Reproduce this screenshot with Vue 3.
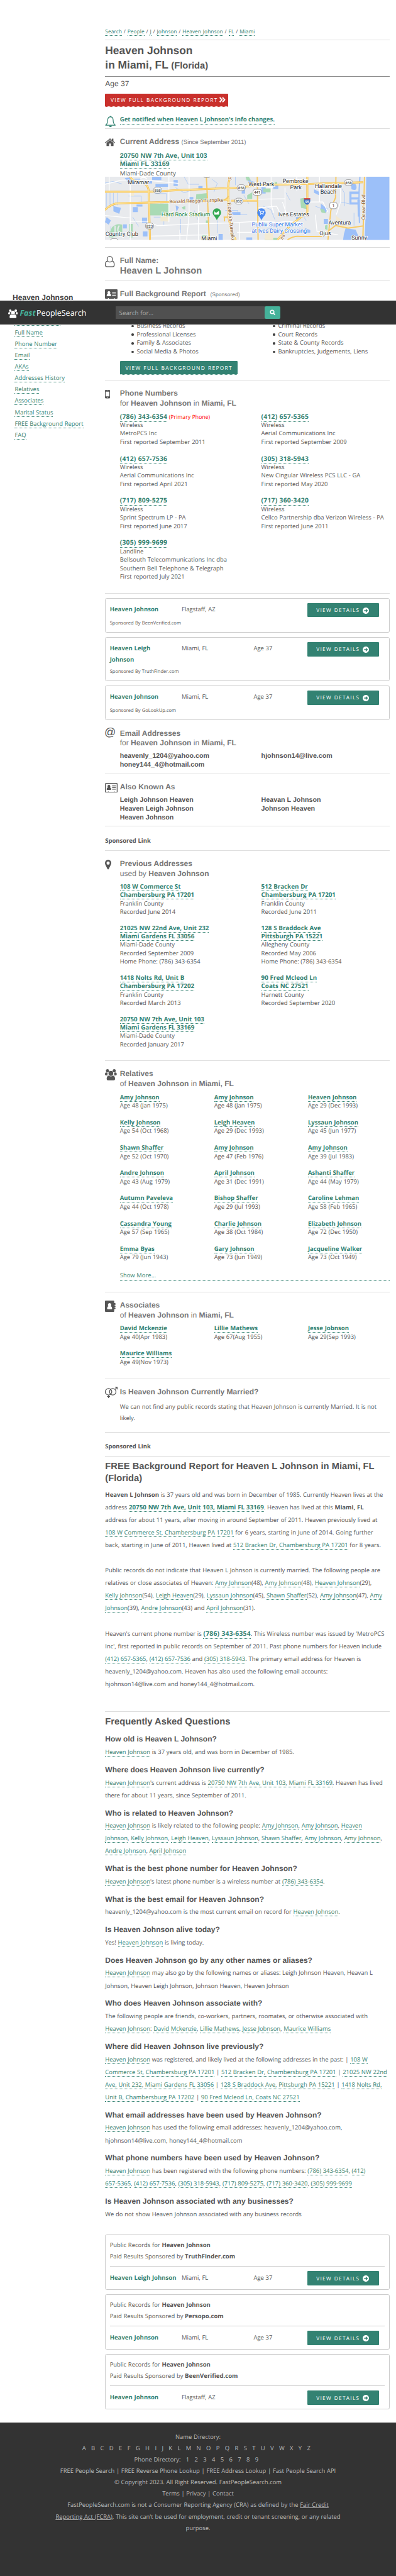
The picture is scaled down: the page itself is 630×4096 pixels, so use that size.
<script setup>
// [text] is a link, *text* is bold, {text} is a bold link
const parse = (line) =>
  line.split(/(\[[^\]]*\]|\*[^*]*\*|\{[^}]*\})/).filter(Boolean).map((t) => {
    if (t[0] === '[') return { kind: 'lk', text: t.slice(1, -1) }
    if (t[0] === '{') return { kind: t[1] === '(' ? 'lk b num' : 'lk b ad-link', text: t.slice(1, -1) }
    if (t[0] === '*') return { kind: 'b', text: t.slice(1, -1) }
    return { kind: '', text: t }
  })

const crumbs = ['Search', 'People', 'J', 'Johnson', 'Heaven Johnson', 'FL', 'Miami']
const nav = ['Current Address', 'Full Name', 'Phone Number', 'Email', 'AKAs', 'Addresses History', 'Relatives', 'Associates', 'Marital Status', 'FREE Background Report', 'FAQ']
const reportA = ['Business Records', 'Professional Licenses', 'Family & Associates', 'Social Media & Photos']
const reportB = ['Criminal Records', 'Court Records', 'State & County Records', 'Bankruptcies, Judgements, Liens']
const phones = [
  { n: '(786) 343-6354', primary: true, l: ['Wireless', 'MetroPCS Inc', 'First reported September 2011'] },
  { n: '(412) 657-5365', l: ['Wireless', 'Aerial Communications Inc', 'First reported September 2009'] },
  { n: '(412) 657-7536', l: ['Wireless', 'Aerial Communications Inc', 'First reported April 2021'] },
  { n: '(305) 318-5943', l: ['Wireless', 'New Cingular Wireless PCS LLC - GA', 'First reported May 2020'] },
  { n: '(717) 809-5275', l: ['Wireless', 'Sprint Spectrum LP - PA', 'First reported June 2017'] },
  { n: '(717) 360-3420', l: ['Wireless', 'Cellco Partnership dba Verizon Wireless - PA', 'First reported June 2011'] },
  { n: '(305) 999-9699', l: ['Landline', 'Bellsouth Telecommunications Inc dba', 'Southern Bell Telephone & Telegraph', 'First reported July 2021'] }
]
const ads = [
  { name: 'Heaven Johnson', loc: 'Flagstaff, AZ', age: '', by: 'BeenVerified.com' },
  { name: 'Heaven Leigh Johnson', loc: 'Miami, FL', age: 'Age 37', by: 'TruthFinder.com', tall: true },
  { name: 'Heaven Johnson', loc: 'Miami, FL', age: 'Age 37', by: 'GoLookUp.com' }
]
const paid = [
  { name: 'Heaven Leigh Johnson', loc: 'Miami, FL', age: 'Age 37', by: 'TruthFinder.com' },
  { name: 'Heaven Johnson', loc: 'Miami, FL', age: 'Age 37', by: 'Persopo.com' },
  { name: 'Heaven Johnson', loc: 'Flagstaff, AZ', age: '', by: 'BeenVerified.com' }
]
const emails = ['heavenly_1204@yahoo.com', 'hjohnson14@live.com', 'honey144_4@hotmail.com']
const akas = ['Leigh Johnson Heaven', 'Heavan L Johnson', 'Heaven Leigh Johnson', 'Johnson Heaven', 'Heaven Johnson']
const places = [
  ['108 W Commerce St', 'Chambersburg PA 17201', 'Franklin County', 'Recorded June 2014'],
  ['512 Bracken Dr', 'Chambersburg PA 17201', 'Franklin County', 'Recorded June 2011'],
  ['21025 NW 22nd Ave, Unit 232', 'Miami Gardens FL 33056', 'Miami-Dade County', 'Recorded September 2009', 'Home Phone: (786) 343-6354'],
  ['128 S Braddock Ave', 'Pittsburgh PA 15221', 'Allegheny County', 'Recorded May 2006', 'Home Phone: (786) 343-6354'],
  ['1418 Nolts Rd, Unit B', 'Chambersburg PA 17202', 'Franklin County', 'Recorded March 2013'],
  ['90 Fred Mcleod Ln', 'Coats NC 27521', 'Harnett County', 'Recorded September 2020'],
  ['20750 NW 7th Ave, Unit 103', 'Miami Gardens FL 33169', 'Miami-Dade County', 'Recorded January 2017']
]
const relatives = [
  ['Amy Johnson', 'Age 48 (Jan 1975)'], ['Amy Johnson', 'Age 48 (Jan 1975)'], ['Heaven Johnson', 'Age 29 (Dec 1993)'],
  ['Kelly Johnson', 'Age 54 (Oct 1968)'], ['Leigh Heaven', 'Age 29 (Dec 1993)'], ['Lyssaun Johnson', 'Age 45 (Jun 1977)'],
  ['Shawn Shaffer', 'Age 52 (Oct 1970)'], ['Amy Johnson', 'Age 47 (Feb 1976)'], ['Amy Johnson', 'Age 39 (Jul 1983)'],
  ['Andre Johnson', 'Age 43 (Aug 1979)'], ['April Johnson', 'Age 31 (Dec 1991)'], ['Ashanti Shaffer', 'Age 44 (May 1979)'],
  ['Autumn Paveleva', 'Age 44 (Oct 1978)'], ['Bishop Shaffer', 'Age 29 (Jul 1993)'], ['Caroline Lehman', 'Age 58 (Feb 1965)'],
  ['Cassandra Young', 'Age 57 (Sep 1965)'], ['Charlie Johnson', 'Age 38 (Oct 1984)'], ['Elizabeth Johnson', 'Age 72 (Dec 1950)'],
  ['Emma Byas', 'Age 79 (Jun 1943)'], ['Gary Johnson', 'Age 73 (Jun 1949)'], ['Jacqueline Walker', 'Age 73 (Oct 1949)']
]
const associates = [
  ['David Mckenzie', 'Age 40(Apr 1983)'], ['Lillie Mathews', 'Age 67(Aug 1955)'], ['Jesse Jobnson', 'Age 29(Sep 1993)'],
  ['Maurice Williams', 'Age 49(Nov 1973)']
]
const report = [
  [
    '*Heaven L Johnson* is 37 years old and was born in December of 1985. Currently Heaven lives at the',
    'address {20750 NW 7th Ave, Unit 103, Miami FL 33169}. Heaven has lived at this *Miami, FL*',
    'address for about 11 years, after moving in around September of 2011. Heaven previously lived at',
    '[108 W Commerce St, Chambersburg PA 17201] for 6 years, starting in June of 2014. Going further',
    'back, starting in June of 2011, Heaven lived at [512 Bracken Dr, Chambersburg PA 17201] for 8 years.'
  ],
  [
    'Public records do not indicate that Heaven L Johnson is currently married. The following people are',
    'relatives or close associates of Heaven: [Amy Johnson](48), [Amy Johnson](48), [Heaven Johnson](29),',
    '[Kelly Johnson](54), [Leigh Heaven](29), [Lyssaun Johnson](45), [Shawn Shaffer](52), [Amy Johnson](47), [Amy]',
    '[Johnson](39), [Andre Johnson](43) and [April Johnson](31).'
  ],
  [
    "Heaven's current phone number is {(786) 343-6354}. This Wireless number was issued by 'MetroPCS",
    "Inc', first reported in public records on September of 2011. Past phone numbers for Heaven include",
    '[(412) 657-5365], [(412) 657-7536] and [(305) 318-5943]. The primary email address for Heaven is',
    'heavenly_1204@yahoo.com. Heaven has also used the following email accounts:',
    'hjohnson14@live.com and honey144_4@hotmail.com.'
  ]
]
const faq = [
  { q: 'How old is Heaven L Johnson?', a: ['[Heaven Johnson] is 37 years old, and was born in December of 1985.'] },
  { q: 'Where does Heaven Johnson live currently?', a: ["[Heaven Johnson]'s current address is [20750 NW 7th Ave, Unit 103, Miami FL 33169]. Heaven has lived", 'there for about 11 years, since September of 2011.'] },
  { q: 'Who is related to Heaven Johnson?', a: ['[Heaven Johnson] is likely related to the following people: [Amy Johnson], [Amy Johnson], [Heaven]', '[Johnson], [Kelly Johnson], [Leigh Heaven], [Lyssaun Johnson], [Shawn Shaffer], [Amy Johnson], [Amy Johnson],', '[Andre Johnson], [April Johnson]'] },
  { q: 'What is the best phone number for Heaven Johnson?', a: ["[Heaven Johnson]'s latest phone number is a wireless number at [(786) 343-6354]."] },
  { q: 'What is the best email for Heaven Johnson?', a: ['heavenly_1204@yahoo.com is the most current email on record for [Heaven Johnson].'] },
  { q: 'Is Heaven Johnson alive today?', a: ['Yes! [Heaven Johnson] is living today.'] },
  { q: 'Does Heaven Johnson go by any other names or aliases?', a: ['[Heaven Johnson] may also go by the following names or aliases: Leigh Johnson Heaven, Heavan L', 'Johnson, Heaven Leigh Johnson, Johnson Heaven, Heaven Johnson'] },
  { q: 'Who does Heaven Johnson associate with?', a: ['The following people are friends, co-workers, partners, roomates, or otherwise associated with', '[Heaven Johnson]: [David Mckenzie], [Lillie Mathews], [Jesse Jobnson], [Maurice Williams]'] },
  { q: 'Where did Heaven Johnson live previously?', a: ['[Heaven Johnson] was registered, and likely lived at the following addresses in the past: | [108 W]', '[Commerce St, Chambersburg PA 17201] | [512 Bracken Dr, Chambersburg PA 17201] | [21025 NW 22nd]', '[Ave, Unit 232, Miami Gardens FL 33056] | [128 S Braddock Ave, Pittsburgh PA 15221] | [1418 Nolts Rd,]', '[Unit B, Chambersburg PA 17202] | [90 Fred Mcleod Ln, Coats NC 27521]'] },
  { q: 'What email addresses have been used by Heaven Johnson?', a: ['[Heaven Johnson] has used the following email addresses: heavenly_1204@yahoo.com,', 'hjohnson14@live.com, honey144_4@hotmail.com'] },
  { q: 'What phone numbers have been used by Heaven Johnson?', a: ['[Heaven Johnson] has been registered with the following phone numbers: [(786) 343-6354], [(412)]', '[657-5365], [(412) 657-7536], [(305) 318-5943], [(717) 809-5275], [(717) 360-3420], [(305) 999-9699]'] },
  { q: 'Is Heaven Johnson associated wth any businesses?', a: ['We do not show Heaven Johnson associated with any business records'] }
]
const letters = 'ABCDEFGHIJKLMNOPQRSTUVWXYZ'.split('')
</script>

<template>
  <div class="page">
    <div class="cols">
      <aside class="side">
        <h4>Heaven Johnson</h4>
        <div v-for="n in nav" :key="n" class="nav-item"><a class="lk">{{ n }}</a></div>
      </aside>

      <main class="main">
        <div class="crumbs"><template v-for="(c, i) in crumbs" :key="c">{{ i ? ' / ' : '' }}<a class="lk">{{ c }}</a></template></div>

        <h1>Heaven Johnson<br>in Miami, FL <small>(Florida)</small></h1>

        <div class="intro">
          <div class="age">Age 37</div>
          <a class="btn red"><span>VIEW FULL BACKGROUND REPORT</span>
            <svg width="15" height="14" viewBox="0 0 15 14"><path d="M1 1.500 6 7 1 12.500M7.500 1.500 12.500 7 7.500 12.500" fill="none" stroke="#fff" stroke-width="3" /></svg>
          </a>
          <div class="notify">
            <svg width="26" height="28" viewBox="0 0 26 28"><path d="M13 2.500C8.500 3 6.500 6.500 6.500 11c0 6-1.500 9-5 11.500h23c-3.500-2.500-5-5.500-5-11.500 0-4.500-2-8-6.500-8.500z" fill="none" stroke="#338272" stroke-width="1.800" stroke-linejoin="round" /><path d="M13 0.500v2" stroke="#338272" stroke-width="2" /><path d="M9.500 23.500a3.500 3.500 0 0 0 7 0z" fill="#338272" /></svg>
            <a class="lk b">Get notified when Heaven L Johnson's info changes.</a>
          </div>
        </div>

        <section class="s-address">
          <div class="ico i23"><svg width="24" height="19" viewBox="0 0 24 19"><path d="M12 0 0 10l1.300 1.500L12 2.600l10.700 8.900L24 10l-4-3.400V.8h-3.400v3z" fill="#555" /><path d="M12 4.200 3.700 11v7.500h6.100v-6h4.400v6h6.100V11z" fill="#555" /></svg></div>
          <div>
            <h2>Current Address <small class="since">(Since September 2011)</small></h2>
            <div class="addr"><a class="lk">20750 NW 7th Ave, Unit 103</a><br><a class="lk">Miami FL 33169</a></div>
            <div class="county">Miami-Dade County</div>
          </div>
          <svg class="map" viewBox="0 0 676 150" width="676" height="150">
            <rect width="676" height="150" fill="#e8eaed" />
            <g fill="#9cc0f9">
              <path d="M621 0h55v150h-59l3-70z" />
              <path d="M581 35h24v6h-19v8h19v5h-19v7h17v5h-22zM585 19q12-6 13 5t-12 6zM572 122l24 4 10 24h-40l2-14zM600 55h6v40h-5z" />
              <path d="M47 3l12-1 6 10-10 3zM70 5h14v9H72zM92 10h20v6H92zM112 0h22v8h-22zM120 17h30v7h-30zM163 8h10v14h-10zM20 70l18 4-4 14-14-6zM66 72h12v12H66zM4 96l10 8-5 10-9-6zM43 113h9v10h-9zM75 66h14v5H75zM88 97h12v12H88zM90 130h11v12H90zM168 68l8 4-6 12zM200 48h10v8h-10zM222 22h10v6h-10zM261 84h9v5h-9zM300 84h22v7h-22zM325 28h8v12h-8zM340 8l16 4v6l-16-4zM372 24h10v16h-10zM400 20h12v9h-12zM449 3l10 7-6 4zM454 96h11v5h-11zM497 30l12 6v8l-12-6zM513 64l16 12-4 10-12-10zM520 100h10v12h-10zM476 122l12 5v6h-12zM336 144h14v6h-14zM270 136h10v14h-10z" />
            </g>
            <g fill="none" stroke="#9cc0f9" stroke-width="1">
              <path d="M4 38v35M12 38v35M20 38v32M30 38v30M0 15l20-4 20 6M56 46h30v14M118 40h28v20M168 26l20 12 20-6M188 0l10 18h26M255 6l12 10-8 20M286 80h30v10h22M310 0v20M330 44l12 20M376 70l18 8 10 24M430 38l10 18M440 88h28l10 16M500 70l20 8M558 20l12 20v30M560 60l20 4M592 86v30M116 96h24v20M66 96l14 22M14 118v20h24M180 100v34M212 80l10 24M268 104v30M386 122l24 4" />
              <path d="M606 0q-4 50-1 110" stroke-width="3" />
            </g>
            <g fill="#a9dab5">
              <path d="M217 42l26-3v17h-27zM107 64h45v28h-45zM338 44l12-7v17h-12zM464 52l10-2 6 27-14-3zM17 120q10-10 24-6v26l-24 4q-8-12 0-24zM57 112h9v32h-9zM10 130h8v14h-8zM240 104h8v8h-8zM183 72l8-2v8l-6-1zM511 76l10 2 4 9-10-2zM334 0h8l5 9h-10zM376 28h18v9h-18zM400 12h9v6h-9zM523 116l6-3v14l-6-3zM380 145h30v5h-30zM230 138h12v8h-12z" />
            </g>
            <path d="M132 92h20v14h-20zM60 36h9v10h-9zM548 92l40 30h-36zM380 128h20v22h-20z" fill="#f3ead2" />
            <path d="M24 116v26M34 116q-8 10 2 22" stroke="#e8eaed" stroke-width="3" fill="none" />
            <g fill="none" stroke="#fff" stroke-width="2">
              <path d="M10 0v35M152 0v108M60 12v138M0 18l40-10h55l80 8M200 0v92l-6 58M178 126v24M222 66v84M395 0v66l6 20M338 54l90-2M428 26v60M60 106h40l24 10 50-2 40-2 80-2 70-4 40 2M110 141l140-3M0 92l60 6M364 74l44-4 8 16 50 2 20-4M320 110v40M402 110l30-4 40 4M422 60l10 30M488 60h30l12 24M560 20v40l-10 30M340 20l60 6M314 132h50M500 90l4 40 50 8M84 4q10-6 16 2M510 0v60M456 0v34" />
            </g>
            <g fill="none" stroke="#f5b83d" stroke-width="4.400">
              <path d="M0 36h108l60-4 74-3 78-3M59 0q8 12 24 13 20 2 21 22l3 115M0 79q16-16 32-16l90-2 144-4 30-3M320 26l42-6 126-3 126-4M299 0q-8 16-6 34v60l9 40 9 16M481 0v85l-41 31-30 34M300 57h62" />
            </g>
            <g fill="none" stroke="#fee293" stroke-width="2.600">
              <path d="M0 36h108l60-4 74-3 78-3M59 0q8 12 24 13 20 2 21 22l3 115M0 79q16-16 32-16l90-2 144-4 30-3M320 26l42-6 126-3 126-4M299 0q-8 16-6 34v60l9 40 9 16M481 0v85l-41 31-30 34M300 57h62" />
            </g>
            <g fill="none" stroke="#f7cb68" stroke-width="3">
              <path d="M241 0l3 60 4 90M362 0l2 150M549 0l-1 50q-12 24-12 39l-6 61M617 0l-4 150M434 150q14-10 30-8l50 0 34-26 30 6 36-5M260 54q24 8 34-8M282 96h12M284 96v10" />
            </g>
            <g fill="#fff" stroke="#666" stroke-width=".9">
              <rect x="115" y="25" width="20" height="14" rx="7" /><rect x="314" y="19" width="20" height="14" rx="7" /><rect x="569" y="7" width="20" height="14" rx="7" />
              <rect x="308" y="51" width="20" height="14" rx="7" /><rect x="96" y="110" width="20" height="14" rx="7" /><rect x="352" y="30" width="20" height="14" rx="5" />
              <rect x="534" y="61" width="18" height="15" rx="5" /><rect x="232" y="-12" width="20" height="14" rx="7" /><rect x="12" y="147" width="20" height="14" rx="7" />
            </g>
            <path d="M473 54q8-4 15 0 1 9-7.500 13-9-4-7.500-13z" fill="#3f73c4" /><path d="M473 54v-3h15v3z" fill="#d5403a" />
            <g class="shields" text-anchor="middle">
              <text x="125" y="35.300">858</text><text x="324" y="29.300">858</text><text x="579" y="17.300">858</text><text x="318" y="61.300">852</text>
              <text x="106" y="120.500">823</text><text x="362" y="40.500">441</text><text x="543" y="72">1</text><text class="inv" x="480.500" y="62.500">95</text>
            </g>
            <path d="M266 104c-2-8-10-12-10-19a10 10 0 0 1 20 0c0 7-8 11-10 19z" fill="#34a853" />
            <path d="M260 82l4 4 7-5v9h-11z" fill="#fff" />
            <path d="M372 104c-2-8-10-12-10-19a10 10 0 0 1 20 0c0 7-8 11-10 19z" fill="#4a8af4" />
            <path d="M366 80h2l2 7h6l2-5h-9" fill="none" stroke="#fff" stroke-width="1.500" /><circle cx="370" cy="90" r="1.200" fill="#fff" /><circle cx="375.500" cy="90" r="1.200" fill="#fff" />
            <g class="places">
              <text x="54" y="18">Miramar</text><text x="341" y="22.500">West Park</text><text x="422" y="15.500">Pembroke</text><text x="440" y="29.500">Park</text>
              <text x="499" y="26.500">Hallandale</text><text x="512" y="40.500">Beach</text><text x="412" y="94.500">Ives Estates</text><text x="531" y="113.500">Aventura</text>
              <text x="510" y="139.500">Ojus</text><text x="586" y="149">Sunny</text><text x="1" y="140">Country Club</text><text x="229" y="151.500">Miami</text>
              <text class="park" x="134" y="94.500">Hard Rock Stadium</text><text class="shop" x="349" y="118.500">Publix Super Market</text><text class="shop" x="349" y="132.500">at Ives Dairy Crossing</text>
            </g>
            <g class="roads">
              <text transform="translate(153 63.500) rotate(-2)">Ronald Reagan Turnpike</text>
              <text transform="translate(291 62) rotate(84)">Florida's Turnpike</text>
              <text transform="translate(618 102) rotate(-90)">Ocean Blvd</text>
              <text transform="translate(301 8) rotate(-75)">Fl</text><text transform="translate(422 150) rotate(-60)">ss</text>
            </g>
          </svg>
        </section>

        <section class="s-name">
          <div class="ico i19"><svg width="23" height="27" viewBox="0 0 23 27"><g fill="none" stroke="#555" stroke-width="1.900"><ellipse cx="11.500" cy="7.700" rx="6.300" ry="6.700" /><path d="M6 12.300C2.500 12.700 1 16.500 1 21c0 3 1.500 4.800 4 4.800h13c2.500 0 4-1.800 4-4.800 0-4.500-1.500-8.300-5-8.700" /></g></svg></div>
          <div><h2>Full Name:</h2><div class="fullname">Heaven L Johnson</div></div>
        </section>

        <section class="s-report">
          <div class="ico i21"><svg width="30" height="23" viewBox="0 0 30 23"><path d="M2 0h26a2 2 0 0 1 2 2v18.500a2 2 0 0 1-2 2h-5V21h-2v1.500H9V21H7v1.500H2a2 2 0 0 1-2-2V2a2 2 0 0 1 2-2z" fill="#555" /><path d="M17 6h9v1.800h-9zM17 10h9v1.800h-9zM17 14h9v1.800h-9zM9.500 4.500a3.200 3.500 0 0 1 2.300 6q3 .5 3 4.500 0 1.500-1.500 1.500H5.500Q4 16.500 4 15q0-4 3-4.500a3.200 3.500 0 0 1 2.500-6z" fill="#fff" /></svg></div>
          <div>
            <h2>Full Background Report <small class="spons">(Sponsored)</small></h2>
            <div class="lists">
              <ul><li v-for="r in reportA" :key="r">{{ r }}</li></ul>
              <ul><li v-for="r in reportB" :key="r">{{ r }}</li></ul>
            </div>
            <a class="btn green"><span>VIEW FULL BACKGROUND REPORT</span></a>
          </div>
        </section>

        <section class="s-phones">
          <div class="ico i22"><svg width="12" height="20" viewBox="0 0 12 20"><path fill-rule="evenodd" d="M2 0h8a2 2 0 0 1 2 2v16a2 2 0 0 1-2 2H2a2 2 0 0 1-2-2V2a2 2 0 0 1 2-2zm-.5 4v11.500h9V4zM4 1.800v.8h4v-.8zM6 16.600a1.100 1.100 0 1 0 0 2.200 1.100 1.100 0 0 0 0-2.200z" fill="#555" /></svg></div>
          <div>
            <h2>Phone Numbers<br><i>for</i> Heaven Johnson <i>in</i> Miami, FL</h2>
            <div class="two ph">
              <div v-for="p in phones" :key="p.n" class="cell">
                <div class="top"><a class="lk b num">{{ p.n }}</a><span v-if="p.primary" class="primary">(Primary Phone)</span></div>
                <div v-for="x in p.l" :key="x">{{ x }}</div>
              </div>
            </div>
          </div>
        </section>

        <div class="ads">
          <div v-for="a in ads" :key="a.by" class="ad" :class="{ tall: a.tall }">
            <div class="row">
              <b class="nm narrow">{{ a.name }}</b><span>{{ a.loc }}</span><span>{{ a.age }}</span>
              <a class="btn det"><span>VIEW DETAILS</span><svg width="15" height="15" viewBox="0 0 15 15"><circle cx="7.500" cy="7.500" r="7.500" fill="#fff" /><path d="M3.500 7.500h7M7.500 4l3.500 3.500L7.500 11" fill="none" stroke="#338272" stroke-width="2" /></svg></a>
            </div>
            <div class="by">Sponsored By {{ a.by }}</div>
          </div>
        </div>

        <section class="s-email">
          <div class="ico i21 at">@</div>
          <div>
            <h2>Email Addresses<br><i>for</i> Heaven Johnson <i>in</i> Miami, FL</h2>
            <div class="two strong"><div v-for="e in emails" :key="e">{{ e }}</div></div>
          </div>
        </section>

        <section class="s-aka">
          <div class="ico i21"><svg width="30" height="23" viewBox="0 0 30 23"><rect x="1" y="1" width="28" height="21" rx="1.500" fill="none" stroke="#555" stroke-width="2" /><path d="M17 6h9v1.800h-9zM17 10h9v1.800h-9zM17 14h9v1.800h-9zM9.500 4.500a3.200 3.500 0 0 1 2.300 6q3 .5 3 4.500 0 1.500-1.500 1.500H5.500Q4 16.500 4 15q0-4 3-4.500a3.200 3.500 0 0 1 2.500-6zM7 20h2v2H7zM21 20h2v2h-2z" fill="#555" /></svg></div>
          <div><h2>Also Known As</h2><div class="two strong"><div v-for="e in akas" :key="e">{{ e }}</div></div></div>
        </section>

        <div class="sponsor">Sponsored Link</div>

        <section class="s-prev">
          <div class="ico i21"><svg width="15" height="23" viewBox="0 0 15 23"><path fill-rule="evenodd" d="M7.500 0A7.500 7.700 0 0 1 15 7.700c0 3-2 6-6 14.300q-1.500 2-3 0C2 13.700 0 10.700 0 7.700A7.500 7.700 0 0 1 7.500 0zm0 4a3.700 3.800 0 1 0 0 7.600 3.700 3.800 0 0 0 0-7.600z" fill="#555" /></svg></div>
          <div>
            <h2>Previous Addresses<br><i>used by</i> Heaven Johnson</h2>
            <div class="two pl">
              <div v-for="(p, i) in places" :key="i" class="cell">
                <div v-for="(x, k) in p" :key="k"><a v-if="k < 2" class="lk b ad-link">{{ x }}</a><template v-else>{{ x }}</template></div>
              </div>
            </div>
          </div>
        </section>

        <section class="s-rel">
          <div class="ico i19"><svg width="28" height="27" viewBox="0 0 28 27"><g fill="#555"><ellipse cx="6" cy="3.800" rx="3.700" ry="3.800" /><ellipse cx="22" cy="3.800" rx="3.700" ry="3.800" /><path d="M3 8q-3 0-3 4.500Q0 15 2.500 15h4q-1.500-3.500 0-6.500Q5 8 3 8zM25 8q3 0 3 4.500 0 2.500-2.500 2.500h-4q1.500-3.500 0-6.500Q23 8 25 8z" /><ellipse cx="14" cy="10" rx="5.600" ry="6" /><path d="M9 15.500q-5 1-5 8Q4 26.500 7 26.500h14q3 0 3-3 0-7-5-8-5 3.500-10 0z" /></g></svg></div>
          <div>
            <h2>Relatives<br><i>of</i> Heaven Johnson <i>in</i> Miami, FL</h2>
            <div class="three"><div v-for="(p, i) in relatives" :key="i" class="cell"><a class="lk b">{{ p[0] }}</a><br>{{ p[1] }}</div></div>
            <a class="more">Show More...</a>
          </div>
        </section>

        <section class="s-assoc">
          <div class="ico i19"><svg width="25" height="27" viewBox="0 0 25 27"><path d="M2 0h18a2 2 0 0 1 2 2v4h2q1 0 1 1v3h-2v2h2v3h-2v2h2v2q0 1-1 1h-2v5a2 2 0 0 1-2 2H2a2 2 0 0 1-2-2V2a2 2 0 0 1 2-2z" fill="#555" /><path d="M11 6a4 4.200 0 0 1 2.700 7.300q3.300.7 3.300 5.200 0 2-1.800 2H6.800Q5 20.500 5 18.500q0-4.500 3.300-5.200A4 4.200 0 0 1 11 6z" fill="#fff" /></svg></div>
          <div>
            <h2>Associates<br><i>of</i> Heaven Johnson <i>in</i> Miami, FL</h2>
            <div class="three"><div v-for="(p, i) in associates" :key="i" class="cell"><a class="lk b">{{ p[0] }}</a><br>{{ p[1] }}</div></div>
          </div>
        </section>

        <section class="s-married">
          <div class="ico i19"><svg width="30" height="27" viewBox="0 0 30 27"><g fill="none" stroke="#555" stroke-width="1.900"><circle cx="8.500" cy="12" r="7.700" /><circle cx="18.500" cy="12" r="7.700" /><path d="M8.500 20v7M5 23.500h7M24 6.500l5-5.500M24 1h5v5.500" /></g></svg></div>
          <div><h2>Is Heaven Johnson Currently Married?</h2><p class="m">We can not find any public records stating that Heaven Johnson is currently Married. It is not<br>likely.</p></div>
        </section>

        <div class="sponsor">Sponsored Link</div>

        <div class="free">
          <h2 class="big">FREE Background Report for Heaven L Johnson in Miami, FL<br>(Florida)</h2>
          <p v-for="(p, i) in report" :key="i">
            <span v-for="(l, k) in p" :key="k" class="line"><span v-for="(t, j) in parse(l)" :key="j" :class="t.kind">{{ t.text }}</span></span>
          </p>
        </div>

        <div class="faq">
          <h2 class="big">Frequently Asked Questions</h2>
          <template v-for="f in faq" :key="f.q">
            <h3>{{ f.q }}</h3>
            <p><span v-for="(l, k) in f.a" :key="k" class="line"><span v-for="(t, j) in parse(l)" :key="j" :class="t.kind">{{ t.text }}</span></span></p>
          </template>
        </div>

        <div class="paid">
          <div v-for="a in paid" :key="a.by" class="pcard">
            <div class="ptop">Public Records for <b>Heaven Johnson</b><br>Paid Results Sponsored by <b>{{ a.by }}</b></div>
            <div class="row">
              <b class="nm">{{ a.name }}</b><span>{{ a.loc }}</span><span>{{ a.age }}</span>
              <a class="btn det"><span>VIEW DETAILS</span><svg width="15" height="15" viewBox="0 0 15 15"><circle cx="7.500" cy="7.500" r="7.500" fill="#fff" /><path d="M3.500 7.500h7M7.500 4l3.500 3.500L7.500 11" fill="none" stroke="#338272" stroke-width="2" /></svg></a>
            </div>
          </div>
        </div>
      </main>
    </div>

    <footer>
      <div>Name Directory:</div>
      <div class="dir"><span v-for="l in letters" :key="l">{{ l }}</span></div>
      <div class="dir"><span>Phone Directory:</span><span v-for="d in 9" :key="d">{{ d }}</span></div>
      <div>FREE People Search | FREE Reverse Phone Lookup | FREE Address Lookup | Fast People Search API</div>
      <div>© Copyright 2023. All Right Reserved. FastPeopleSearch.com</div>
      <div>Terms | Privacy | Contact</div>
      <div>FastPeopleSearch.com is not a Consumer Reporting Agency (CRA) as defined by the <u>Fair Credit</u><br><u>Reporting Act (FCRA)</u>. This site can't be used for employment, credit or tenant screening, or any related<br>purpose.</div>
    </footer>

    <header>
      <div class="logo">
        <svg width="23" height="21" viewBox="0 0 28 27" preserveAspectRatio="none"><g fill="#fff"><ellipse cx="6" cy="3.800" rx="3.700" ry="3.800" /><ellipse cx="22" cy="3.800" rx="3.700" ry="3.800" /><path d="M3 8q-3 0-3 4.500Q0 15 2.500 15h4q-1.500-3.500 0-6.500Q5 8 3 8zM25 8q3 0 3 4.500 0 2.500-2.500 2.500h-4q1.500-3.500 0-6.500Q23 8 25 8z" /><ellipse cx="14" cy="10" rx="5.600" ry="6" /><path d="M9 15.500q-5 1-5 8Q4 26.500 7 26.500h14q3 0 3-3 0-7-5-8-5 3.500-10 0z" /></g></svg>
        <em>Fast</em><span>PeopleSearch</span>
      </div>
      <div class="search">Search for...</div>
      <div class="go"><svg width="14" height="14" viewBox="0 0 14 14"><circle cx="6" cy="6" r="4.200" fill="none" stroke="#fff" stroke-width="2.300" /><path d="M9 9l3.800 3.800" stroke="#fff" stroke-width="2.600" /></svg></div>
    </header>
  </div>
</template>

<style>
html, body { margin: 0; background: #fff; }
</style>

<style scoped>
.page { zoom: 0.6693; position: relative; width: 941.3px; height: 6120px; overflow: hidden; font-family: "Open Sans", "Noto Sans", sans-serif; font-size: 14.1px; word-spacing: 0.4px; color: #555; text-rendering: geometricPrecision; white-space: nowrap; box-sizing: border-box; }
.page *, .page *::before { box-sizing: border-box; }
h1, h2, h3, h4, p, ul { margin: 0; padding: 0; font-weight: 400; word-spacing: 0; }
p { word-spacing: 0.4px; }
svg { display: block; word-spacing: 0; }
b, .b { font-weight: 700; font-size: 14.3px; }
.b.num { font-size: 15.400px; letter-spacing: 0.350px; }
.b.ad-link { font-size: 14.600px; }
.lk { color: #338272; border-bottom: 1px dotted #338272; }
.cols { display: flex; height: 5755px; }
.side { width: 250px; padding: 694.5px 0 0 35px; }
.side h4 { font: 700 18px/24px "Liberation Sans", Arial, sans-serif; color: #444; margin: 0 0 31.4px -5px; }
.nav-item { line-height: 27px; }
.main { width: 676px; }
.crumbs { height: 96px; padding-top: 65px; font-size: 12.6px; word-spacing: 1px; line-height: 20px; border-bottom: 1px solid #ddd; white-space: pre; }
h1 { height: 86px; padding-top: 7.4px; font: 700 26px/34.5px "Liberation Sans", Arial, sans-serif; border-bottom: 1px solid #888; }
h1 small { font-size: 22px; }
.intro { height: 124px; padding-top: 5.3px; border-bottom: 1px solid #ddd; }
.age { font: 18px/24px "Liberation Sans", Arial, sans-serif; word-spacing: 0; }
.btn { display: flex; align-items: center; color: #fff; border-radius: 2px; letter-spacing: 2px; font-size: 12.5px; background: #338272; }
.btn.red { background: #c9302c; width: 293px; height: 32.5px; margin-top: 10.7px; padding: 2px 0 0 13px; border-bottom: 1px dotted #fff; gap: 4px; }
.btn.red svg { margin-top: -3px; }
.btn.green { width: 280px; height: 33px; margin-top: 13px; padding: 2px 0 0 13px; border-bottom: 1px dotted #fff; }
.notify { display: flex; margin-top: 20px; align-items: flex-start; gap: 9px; }
.notify .lk { margin-top: -1px; line-height: 20px; height: 22px; word-spacing: 0; }
section { display: grid; grid-template-columns: 35px 641px; align-content: start; align-items: start; border-bottom: 1px solid #ddd; }
.i19 { padding-top: 19.300px; } .i21 { padding-top: 21px; } .i22 { padding-top: 22.700px; } .i23 { padding-top: 23px; }
.at { font: 27px/20px "Liberation Sans", Arial, sans-serif; margin-left: -2px; padding-top: 19px; }
h2 { padding-top: 19.8px; font: 700 18px/23.4px "Liberation Sans", Arial, sans-serif; color: #777; }
h2 i { font-style: normal; font-weight: 400; }
h2 small { font-weight: 400; }
.since { font-size: 14.3px; } .spons { font-size: 12.8px; margin-left: 5px; }
.s-address { height: 283px; grid-template-rows: 114.200px 150px; }
.addr { font: 700 16px/20px "Liberation Sans", Arial, sans-serif; margin-top: 10.700px; word-spacing: 0; }
.county { line-height: 20px; margin-top: 1px; font-size: 14.400px; }
.map { grid-column: 1 / 3; overflow: hidden; }
.places { font: 13.600px Roboto, sans-serif; fill: #333; stroke: #fff; stroke-width: 2.500px; paint-order: stroke; }
.places .park { fill: #188038; }
.places .shop { fill: #2f77e5; }
.roads { font: 12px Roboto, sans-serif; fill: #84552a; stroke: #fff; stroke-width: 2px; paint-order: stroke; }
.shields { font: 500 9px Roboto, sans-serif; fill: #444; }
.shields .inv { fill: #fff; }
.s-name { height: 78px; }
.fullname { font: 700 22px/26px "Liberation Sans", Arial, sans-serif; color: #777; word-spacing: 0; }
.s-report { height: 237px; }
.lists { display: grid; grid-template-columns: 336px 305px; margin-top: 51.900px; }
ul { list-style: none; }
li { line-height: 20.400px; padding-left: 40px; position: relative; word-spacing: 0.4px; }
li::before { content: ""; position: absolute; left: 27.500px; top: 8.500px; width: 5.500px; height: 5.500px; border-radius: 50%; background: #444; }
.s-phones { height: 507px; }
.two { display: grid; grid-template-columns: 336px 305px; }
.ph { margin-top: 9.100px; line-height: 20px; }
.ph .cell { padding-bottom: 20px; }
.ph .top { height: 20px; }
.primary { color: #f00; font-size: 13px; margin-left: 4px; }
.ads { margin-top: 10.500px; display: flex; flex-direction: column; gap: 10.500px; height: 290.200px; }
.ad { height: 82.300px; border: 1px solid #ccc; border-radius: 4px; padding: 0 9.500px; flex: none; }
.ad.tall { height: 104.500px; }
.row { display: grid; grid-template-columns: 171px 171px 128px 170px; align-items: start; min-height: 49px; line-height: 27px; padding-top: 11.500px; }
.nm { color: #338272; }
.nm.narrow { white-space: normal; width: 150px; padding-bottom: 5px; }
.btn.det { height: 34px; margin-top: -2px; padding: 2px 0 0 21px; gap: 7px; line-height: 20px; font-size: 12.300px; }
.by { font-size: 11.300px; line-height: 18px; }
.s-email { height: 127.300px; }
.strong { font: 700 16px/21px "Liberation Sans", Arial, sans-serif; margin-top: 7.700px; word-spacing: 0; }
.s-aka { height: 125px; }
.sponsor { height: 58px; padding-top: 23.500px; line-height: 20px; font-weight: 700; border-bottom: 1px solid #ddd; }
.s-prev { height: 499px; }
.pl { margin-top: 8.200px; line-height: 19.700px; }
.pl .cell { padding-bottom: 19.700px; }
.pl .cell > div { height: 19.700px; }
.s-rel { height: 549px; }
.three { display: grid; grid-template-columns: 224px 223px 194px; grid-auto-rows: 60px; margin-top: 9.100px; line-height: 20px; }
.more { display: block; height: 27px; line-height: 27px; color: #338272; border-bottom: 1px dotted #338272; }
.s-assoc { height: 206px; }
.s-married { height: 127px; }
p.m { line-height: 28px; margin-top: 9.500px; }
.free { height: 606.500px; border-bottom: 1px solid #ddd; }
h2.big { font-size: 22px; line-height: 28.300px; color: #555; padding-top: 9.800px; }
.line { display: block; height: 30px; line-height: 30px; white-space: pre; }
.free p { margin: 8.900px 0 21.100px; }
.free p + p { margin-top: 30px; }
.faq { height: 1241.800px; }
h3 { font: 700 18px/24px "Liberation Sans", Arial, sans-serif; margin: 14.600px 0 3.900px; }
.paid { display: flex; flex-direction: column; gap: 11px; }
.pcard { height: 131px; border: 1px solid #ccc; border-radius: 4px; padding: 0 9.500px; }
.ptop { height: 74px; padding-top: 10.300px; line-height: 27px; border-bottom: 1px solid #ccc; }
.pcard .row { padding-top: 13px; }
footer { height: 365px; background: #333; color: #bbb; padding-top: 21.200px; line-height: 27px; text-align: center; }
.dir { display: flex; justify-content: center; gap: 12.500px; padding-right: 8px; }
header { position: absolute; left: 0; top: 714px; width: 100%; height: 57px; background: #333; }
.logo { position: absolute; left: 19px; top: 15px; display: flex; align-items: center; font-size: 18.700px; color: #fff; line-height: 30px; }
.logo svg { margin-top: 2px; }
.logo em { color: #45b29a; font-weight: 700; margin-left: 5px; }
.logo span { margin-left: 2px; }
.search { position: absolute; left: 274.300px; top: 13px; width: 355px; height: 30.700px; background: #505050; color: #aaa; padding-left: 9px; line-height: 32px; font-size: 14.600px; }
.go { position: absolute; left: 629px; top: 13px; width: 38px; height: 30.700px; border-radius: 3px; background: #45b29a; display: grid; place-items: center; }
</style>
